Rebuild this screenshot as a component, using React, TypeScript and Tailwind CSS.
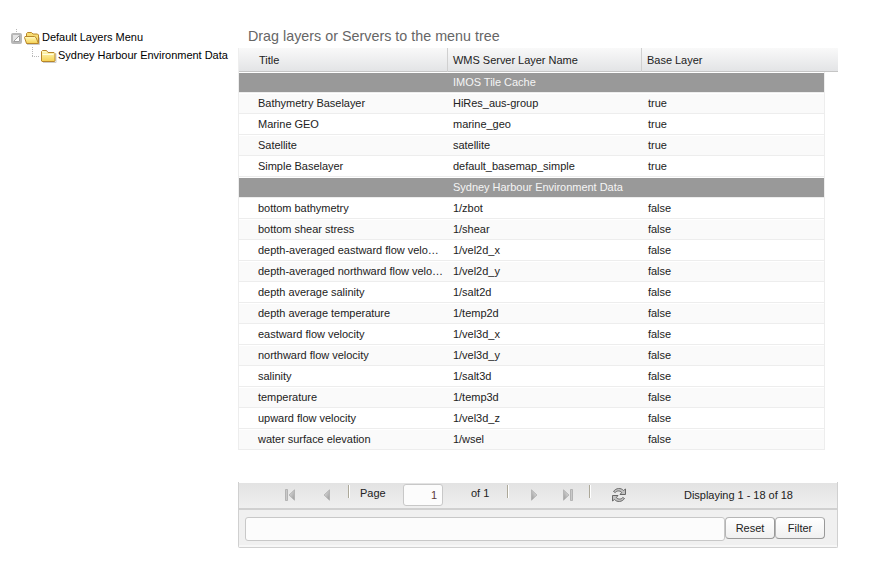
import React from "react";

type Row = { group: string } | { title: string; name: string; base: string };

const rows: Row[] = [
  { group: "IMOS Tile Cache" },
  { title: "Bathymetry Baselayer", name: "HiRes_aus-group", base: "true" },
  { title: "Marine GEO", name: "marine_geo", base: "true" },
  { title: "Satellite", name: "satellite", base: "true" },
  { title: "Simple Baselayer", name: "default_basemap_simple", base: "true" },
  { group: "Sydney Harbour Environment Data" },
  { title: "bottom bathymetry", name: "1/zbot", base: "false" },
  { title: "bottom shear stress", name: "1/shear", base: "false" },
  { title: "depth-averaged eastward flow velo…", name: "1/vel2d_x", base: "false" },
  { title: "depth-averaged northward flow velo…", name: "1/vel2d_y", base: "false" },
  { title: "depth average salinity", name: "1/salt2d", base: "false" },
  { title: "depth average temperature", name: "1/temp2d", base: "false" },
  { title: "eastward flow velocity", name: "1/vel3d_x", base: "false" },
  { title: "northward flow velocity", name: "1/vel3d_y", base: "false" },
  { title: "salinity", name: "1/salt3d", base: "false" },
  { title: "temperature", name: "1/temp3d", base: "false" },
  { title: "upward flow velocity", name: "1/vel3d_z", base: "false" },
  { title: "water surface elevation", name: "1/wsel", base: "false" },
];

function Folder({ open = false }: { open?: boolean }) {
  return (
    <svg width="16" height="14" viewBox="0 0 16 14" className="shrink-0">
      <defs>
        <linearGradient id="folder" x1="0" y1="0" x2="0" y2="1">
          <stop offset="0" stopColor="#fffcc4" />
          <stop offset="1" stopColor="#f5d050" />
        </linearGradient>
      </defs>
      {open ? (
        <>
          <path d="M3 13.500h12.500v-7" fill="none" stroke="#cccccc" />
          <path d="M2.500 12V2.500l1-1h4l1.500 1.500h4.500l1 1v8z" fill="#f7dc72" stroke="#b8862b" />
          <path d="M2.500 12.500L.5 6.500l.5-1h9.500l1.500 1 2.500 6z" fill="url(#folder)" stroke="#b8862b" />
        </>
      ) : (
        <>
          <path d="M2 13.500h13v-9" fill="none" stroke="#cccccc" />
          <path d="M.5 12V2.500l1-1h4l1.500 2h6l1 1v7.500l-.5.500H1z" fill="url(#folder)" stroke="#b8862b" />
          <path d="M1.500 5.500h11" stroke="#fffde0" />
        </>
      )}
    </svg>
  );
}

function Arrow({ flip = false, bar = false }: { flip?: boolean; bar?: boolean }) {
  return (
    <svg width="12" height="12" viewBox="0 0 12 12" className={flip ? "-scale-x-100" : ""}>
      <defs>
        <linearGradient id="arrow" x1="0" y1="0" x2="1" y2="1">
          <stop offset="0" stopColor="#e6e6e6" />
          <stop offset="1" stopColor="#999999" />
        </linearGradient>
      </defs>
      {bar && <path d="M1.500 .5h2v11h-2z" fill="#c9c9c9" stroke="#a9a9a9" strokeWidth=".8" />}
      <path d="M10.500 .8v10.400L5 6z" fill="url(#arrow)" stroke="#aaaaaa" strokeWidth=".7" />
    </svg>
  );
}

function Refresh() {
  return (
    <svg width="16" height="16" viewBox="0 0 16 16" fill="none">
      <g fill="#c2c2c2" stroke="#686868" strokeWidth="1" strokeLinejoin="round">
        <path d="M2.500 4.500C5 .8 10 .6 12.500 3.500L14.500 2v5.500H9L10.700 5.500C8.800 3.400 6 3.400 4.200 5.500z" />
        <path d="M13.500 11.500C11 15.200 6 15.400 3.500 12.500L1.500 14V8.500H7L5.300 10.500C7.200 12.600 10 12.600 11.800 10.500z" />
      </g>
    </svg>
  );
}

function Separator() {
  return <span className="h-[13px] w-[2px] border-l border-r border-l-[#aca899] border-r-white" />;
}

function GridRow({ row, index }: { row: Row; index: number }) {
  if ("group" in row) {
    return (
      <div className="h-[21px] border-y border-t-white border-b-[#ededed] bg-[#999999] pl-[214px] leading-[19px] text-[#f5f5f5]">
        {row.group}
      </div>
    );
  }
  return (
    <div
      className={`grid h-[21px] grid-cols-[208px_195px_1fr] border-y border-t-white border-b-[#ededed] leading-[19px] ${
        index % 2 ? "bg-[#fafafa]" : "bg-white"
      }`}
    >
      <span className="whitespace-nowrap pl-[19px]">{row.title}</span>
      <span className="pl-[6px]">{row.name}</span>
      <span className="pl-[6px]">{row.base}</span>
    </div>
  );
}

export default function App() {
  return (
    <div className="flex h-[568px] w-[883px] bg-white font-['Liberation_Sans',Arial,sans-serif] text-[11px] tracking-[-0.025px] text-[#222222]">
      <aside className="w-[238px] pt-[28px] text-black">
        <div className="flex h-[18px] items-center pl-[11px]">
          <svg width="13" height="18" viewBox="0 0 13 18" className="shrink-0">
            <path d="M5.500 1v4" stroke="#b8b8b8" strokeDasharray="1 1" />
            <rect x="1" y="6" width="9" height="9" rx="1" fill="#e4e4e4" stroke="#b8b8b8" strokeWidth="2" />
            <path d="M8.500 7.500v6h-6z" fill="white" stroke="#a0a0a0" />
          </svg>
          <span className="pt-px"><Folder open /></span>
          <span className="pl-[2px]">Default Layers Menu</span>
        </div>
        <div className="flex h-[18px] items-center pl-[32px]">
          <svg width="9" height="18" viewBox="0 0 9 18" className="shrink-0">
            <path d="M.5 1v9" stroke="#b8b8b8" strokeDasharray="1 1" />
            <path d="M0 10.500h8" stroke="#b8b8b8" strokeDasharray="1 1" />
          </svg>
          <span className="pt-[2px]"><Folder /></span>
          <span className="whitespace-nowrap pl-px">Sydney Harbour Environment Data</span>
        </div>
      </aside>

      <main className="w-[600px] pt-[24px]">
        <h1 className="h-[24px] pl-[10px] text-[14.3px] leading-[24px] tracking-[0.015px] text-[#666666]">Drag layers or Servers to the menu tree</h1>
        <div className="grid h-[24px] grid-cols-[209px_194px_1fr] border-b border-[#c5c5c5] bg-linear-to-b from-[#f9f9f9] to-[#e3e4e6] leading-[24px]">
          <span className="border-l border-[#eeeeee] pl-[20px]">Title</span>
          <span className="border-l border-[#d0d0d0] pl-[5px]">WMS Server Layer Name</span>
          <span className="border-l border-[#d0d0d0] pl-[5px]">Base Layer</span>
        </div>
        <div className="w-[587px] border-x border-[#ededed]">
          {rows.map((row, i) => (
            <GridRow key={i} row={row} index={i} />
          ))}
        </div>

        <div className="mt-[32px] h-[66px] rounded-b-[2px] border-x border-b border-[#d0d0d0] bg-[#f0f0f0]">
          <div className="flex h-[28px] border-t border-b-2 border-t-white border-b-[#d0d0d0] bg-linear-to-b from-[#e3e3e3] to-[#efefef]">
            <div className="flex w-[109px] items-start pt-[6px] pl-[45px]">
              <Arrow bar />
              <span className="pl-[23px]"><Arrow /></span>
            </div>
            <div className="flex w-[55px] pt-[2px]">
              <Separator />
              <span className="pl-[10px] leading-[17px]">Page</span>
            </div>
            <div className="mt-px h-[22px] w-[40px] rounded-[3px] border border-[#c8c8c8] bg-[#fcfcfc] pr-[5px] text-right leading-[20px] text-[#5c3a3a]">1</div>
            <div className="flex pt-[2px]">
              <span className="w-[64px] pl-[28px] leading-[17px]">of 1</span>
              <Separator />
            </div>
            <div className="flex w-[80px] items-start pt-[6px] pl-[21px]">
              <Arrow flip />
              <span className="pl-[20px]"><Arrow flip bar /></span>
            </div>
            <div className="flex pt-[2px]"><Separator /></div>
            <div className="w-[93px] pt-[4px] pl-[20px]"><Refresh /></div>
            <span className="whitespace-nowrap leading-[25px]">Displaying 1 - 18 of 18</span>
          </div>
          <div className="flex h-[37px] border-b-2 border-[#f7f7f7] pt-[7px] pl-[6px]">
            <div className="h-[24px] w-[480px] rounded-[3px] border border-[#c8c8c8] bg-[#fcfcfc]" />
            <button className="h-[22px] w-[50px] rounded-[4px] border border-[#b5b5b5] border-r-[#999999] border-b-[#999999] bg-linear-to-b from-white to-[#f0f0f0] leading-[20px]">Reset</button>
            <button className="h-[22px] w-[50px] rounded-[4px] border border-[#b5b5b5] border-r-[#999999] border-b-[#999999] bg-linear-to-b from-white to-[#f0f0f0] leading-[20px]">Filter</button>
          </div>
        </div>
      </main>
    </div>
  );
}
